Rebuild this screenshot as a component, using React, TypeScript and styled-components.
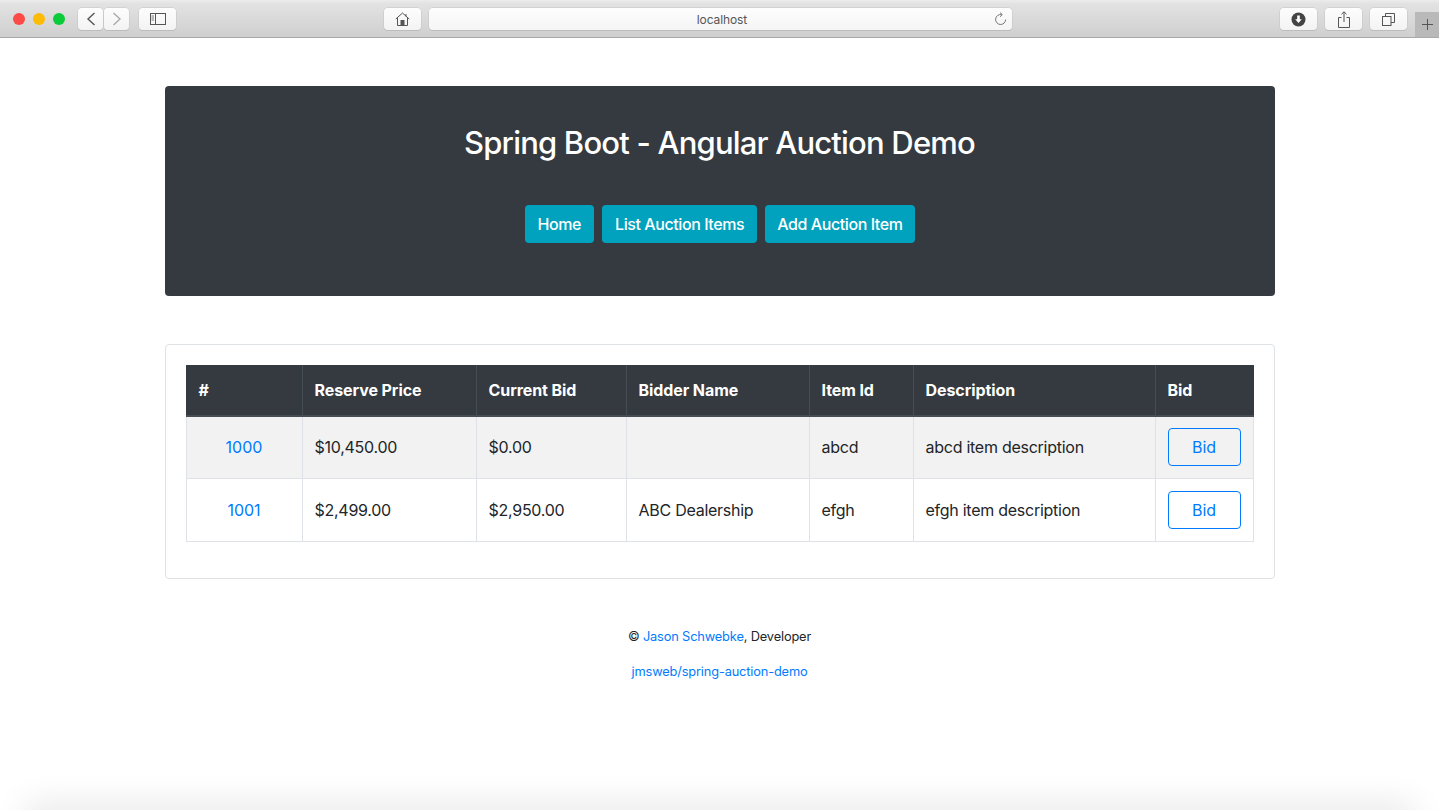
import React from 'react';
import styled, { createGlobalStyle } from 'styled-components';

const GlobalStyle = createGlobalStyle`
  html, body {
    margin: 0;
    height: 810px;
    overflow: hidden;
    background: #fff;
    color: #212529;
    font-family: Inter, "Liberation Sans", sans-serif;
    font-size: 16px;
    -webkit-font-smoothing: antialiased;
  }
`;

const rows = [
  { id: '1000', reserve: '$10,450.00', current: '$0.00', bidder: '', item: 'abcd', description: 'abcd item description' },
  { id: '1001', reserve: '$2,499.00', current: '$2,950.00', bidder: 'ABC Dealership', item: 'efgh', description: 'efgh item description' },
];

const columns = [
  { title: '#', width: 116 },
  { title: 'Reserve Price', width: 174 },
  { title: 'Current Bid', width: 150 },
  { title: 'Bidder Name', width: 183 },
  { title: 'Item Id', width: 104 },
  { title: 'Description', width: 242 },
  { title: 'Bid', width: 98 },
];

export default function App() {
  return (
    <>
      <GlobalStyle />
      <Toolbar>
        <Lights>
          <Light $color="#fc4a46" />
          <Light $color="#fdbb05" />
          <Light $color="#0ccb3a" />
        </Lights>
        <NavGroup>
          <ToolButton $width={25}>
            <svg width="12" height="16" viewBox="0 0 12 16" fill="none" stroke="#555" strokeWidth="1.4"><path d="M9.5 2 3 8l6.5 6" /></svg>
          </ToolButton>
          <ToolButton $width={25}>
            <svg width="12" height="16" viewBox="0 0 12 16" fill="none" stroke="#aaa" strokeWidth="1.4"><path d="M2.5 2 9 8l-6.5 6" /></svg>
          </ToolButton>
        </NavGroup>
        <SidebarSlot>
          <ToolButton $width={37}>
            <svg width="16" height="12" viewBox="0 0 16 12" fill="none" stroke="#555"><rect x=".5" y=".5" width="15" height="11" /><path d="M5.5 0v12" /><path d="M1.5 3H4M1.5 5H4M1.5 7H4" strokeWidth=".8" /></svg>
          </ToolButton>
        </SidebarSlot>
        <HomeSlot>
          <ToolButton $width={37}>
            <svg width="15" height="14" viewBox="0 0 15 14" fill="none" stroke="#555"><path d="M.8 7 7.5 1l6.7 6" /><path d="M2.5 6v7.5h10V6" /><path d="M11 2v2.5" /><rect x="6" y="8.5" width="3" height="5" fill="#555" /></svg>
          </ToolButton>
        </HomeSlot>
        <UrlBar>
          <UrlText>localhost</UrlText>
          <Reload>
            <svg width="13" height="14" viewBox="0 0 13 14" fill="none" stroke="#777"><path d="M7.6 2.6A5 5 0 1 0 11.6 7.5" /><path d="M6 .6 8.3 2.6 6 4.8" /></svg>
          </Reload>
        </UrlBar>
        <RightTools>
          <ToolButton $width={37}>
            <svg width="15" height="15" viewBox="0 0 15 15"><circle cx="7.5" cy="7.5" r="7" fill="#444" /><path d="M6.2 3.5h2.600v3.700h2L7.500 11 4.200 7.200h2z" fill="#fff" /></svg>
          </ToolButton>
          <ToolButton $width={37}>
            <svg width="12" height="17" viewBox="0 0 12 17" fill="none" stroke="#555"><path d="M3.500 6.500H.5v10h11v-10h-3" /><path d="M6 11V1M3.500 3.200 6 .8l2.500 2.400" /></svg>
          </ToolButton>
          <ToolButton $width={37}>
            <svg width="13" height="13" viewBox="0 0 13 13" fill="none" stroke="#555"><rect x=".5" y="3.500" width="8.500" height="9" /><path d="M3.500 3.500V.5h9v9H9" /></svg>
          </ToolButton>
        </RightTools>
        <NewTab>
          <svg width="11" height="11" viewBox="0 0 11 11" stroke="#555"><path d="M5.500 0v11M0 5.500h11" /></svg>
        </NewTab>
      </Toolbar>

      <Page>
        <Jumbotron>
          <Title>Spring Boot - Angular Auction Demo</Title>
          <Buttons>
            <InfoButton>Home</InfoButton>
            <InfoButton>List Auction Items</InfoButton>
            <InfoButton>Add Auction Item</InfoButton>
          </Buttons>
        </Jumbotron>

        <Card>
          <Table>
            <colgroup>
              {columns.map(c => <col key={c.title} style={{ width: c.width }} />)}
            </colgroup>
            <thead>
              <tr>
                {columns.map(c => <Th key={c.title}>{c.title}</Th>)}
              </tr>
            </thead>
            <tbody>
              {rows.map((r, i) => (
                <Row key={r.id} $striped={i % 2 === 0}>
                  <IdCell><BlueLink>{r.id}</BlueLink></IdCell>
                  <Td>{r.reserve}</Td>
                  <Td>{r.current}</Td>
                  <Td>{r.bidder}</Td>
                  <Td>{r.item}</Td>
                  <Td>{r.description}</Td>
                  <BidCell><BidButton>Bid</BidButton></BidCell>
                </Row>
              ))}
            </tbody>
          </Table>
        </Card>

        <Footer>
          <FooterLine>© <BlueLink>Jason Schwebke</BlueLink>, Developer</FooterLine>
          <FooterLine><BlueLink>jmsweb/spring-auction-demo</BlueLink></FooterLine>
        </Footer>
      </Page>
      <WindowShadow />
    </>
  );
}

const Toolbar = styled.header`
  display: flex;
  align-items: flex-start;
  box-sizing: border-box;
  height: 38px;
  padding: 8px 0 0 13px;
  background: linear-gradient(#ececec 0, #e2e2e2 4px, #cfcfcf 100%);
  border-bottom: 1px solid #a9a9a9;
  position: relative;
`;

const Lights = styled.div`
  display: flex;
  gap: 8px;
  margin-top: 5px;
`;

const Light = styled.span<{ $color: string }>`
  width: 12px;
  height: 12px;
  border-radius: 50%;
  background: ${props => props.$color};
`;

const NavGroup = styled.div`
  display: flex;
  gap: 1px;
  margin-left: 13px;
`;

const SidebarSlot = styled.div`
  margin-left: 10px;
`;

const HomeSlot = styled.div`
  margin-left: 208px;
`;

const ToolButton = styled.div<{ $width: number }>`
  display: flex;
  align-items: center;
  justify-content: center;
  box-sizing: border-box;
  width: ${props => props.$width}px;
  height: 22px;
  background: linear-gradient(#fdfdfd, #f3f3f3);
  border-radius: 4px;
  box-shadow: 0 0 0 .5px #c4c4c4, 0 1px 0 #b5b5b5;
`;

const UrlBar = styled.div`
  display: flex;
  align-items: center;
  justify-content: center;
  position: relative;
  width: 583px;
  height: 22px;
  margin-left: 8px;
  padding-left: 3px;
  box-sizing: border-box;
  background: linear-gradient(#fdfdfd, #f5f5f5);
  border-radius: 4px;
  box-shadow: 0 0 0 .5px #c4c4c4, 0 1px 0 #b5b5b5;
`;

const UrlText = styled.span`
  font-size: 12px;
  letter-spacing: -.1px;
  color: #555;
`;

const Reload = styled.span`
  position: absolute;
  right: 5px;
  top: 4px;
  display: flex;
`;

const RightTools = styled.div`
  display: flex;
  gap: 8px;
  margin-left: 268px;
`;

const NewTab = styled.div`
  display: flex;
  align-items: center;
  justify-content: center;
  width: 24px;
  height: 25px;
  margin: 4px 0 0 8px;
  background: #b9b9b9;
`;

const Page = styled.main`
  box-sizing: border-box;
  width: 1110px;
  margin: 0 auto;
  padding-top: 48px;
`;

const Jumbotron = styled.section`
  box-sizing: border-box;
  height: 210px;
  padding-top: 38px;
  background: #343a40;
  border-radius: 4px;
  text-align: center;
`;

const Title = styled.h2`
  margin: 0;
  font-size: 31px;
  font-weight: 500;
  letter-spacing: -.8px;
  line-height: 38px;
  color: #fff;
`;

const Buttons = styled.div`
  display: flex;
  justify-content: center;
  gap: 8px;
  margin-top: 43px;
`;

const InfoButton = styled.a`
  padding: 0 13px;
  height: 38px;
  line-height: 38px;
  background: #00a2bd;
  color: #fff;
  border-radius: 4px;
  font-weight: 500;
  letter-spacing: -.42px;
  &:last-child { padding: 0 12px; }
`;

const Card = styled.section`
  box-sizing: border-box;
  height: 235px;
  margin-top: 48px;
  padding: 20px;
  border: 1px solid #dfe2e5;
  border-radius: 4px;
`;

const Table = styled.table`
  width: 1067px;
  table-layout: fixed;
  border-collapse: collapse;
  color: #212529;
`;

const Th = styled.th`
  box-sizing: border-box;
  height: 50px;
  padding: 0 12px;
  text-align: left;
  font-weight: 700;
  letter-spacing: -.08px;
  color: #fff;
  background: #343a40;
  border: 1px solid #454d55;
  border-top-color: #343a40;
  border-bottom: 2px solid #454d55;
  &:first-child { border-left-color: #343a40; }
  &:last-child { border-right-color: #343a40; }
`;

const Row = styled.tr<{ $striped: boolean }>`
  height: 63px;
  background: ${props => (props.$striped ? '#f2f2f2' : '#fff')};
`;

const Td = styled.td`
  box-sizing: border-box;
  padding: 0 12px;
  border: 1px solid #dee2e6;
  letter-spacing: -.26px;
`;

const IdCell = styled(Td)`
  text-align: center;
  letter-spacing: 0;
`;

const BidCell = styled(Td)`
  text-align: center;
  letter-spacing: 0;
`;

const BlueLink = styled.a`
  color: #007bff;
`;

const BidButton = styled.button`
  box-sizing: border-box;
  width: 73px;
  height: 38px;
  padding: 0;
  font: inherit;
  color: #007bff;
  background: transparent;
  border: 1px solid #007bff;
  border-radius: 4px;
`;

const Footer = styled.footer`
  margin-top: 48px;
  text-align: center;
  font-size: 12.8px;
  letter-spacing: -.15px;
  color: #212529;
`;

const FooterLine = styled.p`
  margin: 0 0 16px;
  line-height: 19px;
`;

const WindowShadow = styled.div`
  position: fixed;
  left: 32px;
  right: 32px;
  top: 812px;
  height: 20px;
  box-shadow: 0 0 36px 6px rgba(0, 0, 0, .11);
`;
